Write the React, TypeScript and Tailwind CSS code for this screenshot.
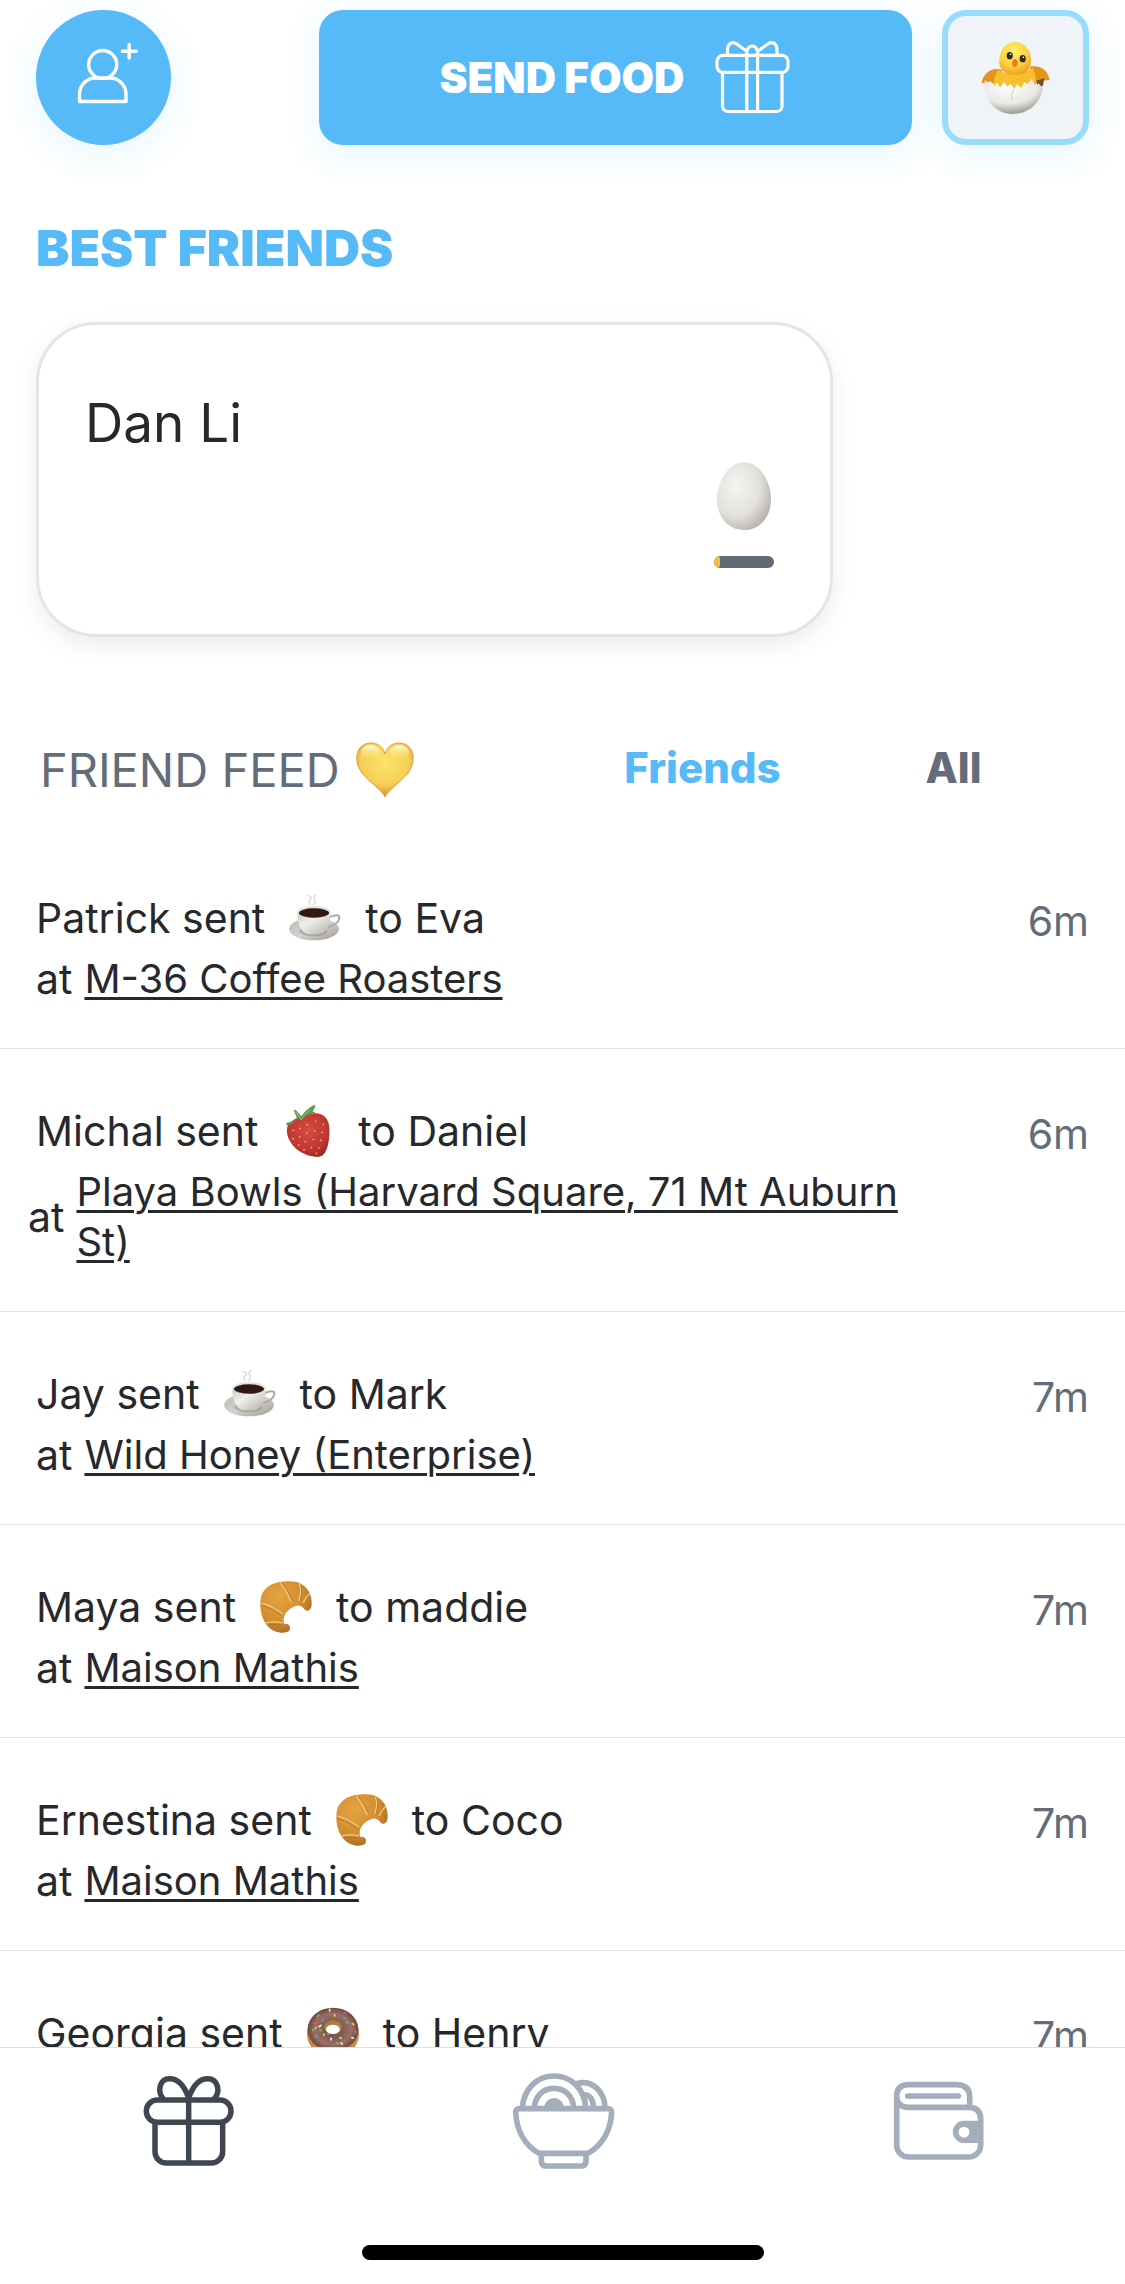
import { useState } from "react";

type Food = "coffee" | "strawberry" | "croissant" | "donut";

const feedData: {
  from: string;
  to: string;
  food: Food;
  place: string;
  time: string;
  wide?: boolean;
}[] = [
  { from: "Patrick", to: "Eva", food: "coffee", place: "M-36 Coffee Roasters", time: "6m" },
  {
    from: "Michal",
    to: "Daniel",
    food: "strawberry",
    place: "Playa Bowls (Harvard Square, 71 Mt Auburn St)",
    time: "6m",
    wide: true,
  },
  { from: "Jay", to: "Mark", food: "coffee", place: "Wild Honey (Enterprise)", time: "7m" },
  { from: "Maya", to: "maddie", food: "croissant", place: "Maison Mathis", time: "7m" },
  { from: "Ernestina", to: "Coco", food: "croissant", place: "Maison Mathis", time: "7m" },
  { from: "Georgia", to: "Henry", food: "donut", place: "Dunkin", time: "7m" },
];

function AddFriendIcon() {
  return (
    <svg viewBox="36 10 135 135" className="size-full" fill="none" stroke="white" strokeWidth="3.4" aria-hidden="true">
      <circle cx="102.7" cy="64.5" r="14" />
      <path d="M79.5 101.5V94a16 16 0 0 1 16-16h14.500a16 16 0 0 1 16 16v7.500z" strokeLinejoin="round" />
      <path d="M129.200 44.500v13.500M122.300 51.300h14" strokeLinecap="round" />
    </svg>
  );
}

function SendGiftIcon() {
  return (
    <svg
      viewBox="716 40 77 75"
      className="h-[75px] w-[77px]"
      fill="none"
      stroke="white"
      strokeWidth="3.2"
      strokeLinejoin="round"
      aria-hidden="true"
    >
      <rect x="719" y="55.300" width="71" height="17" rx="6" />
      <path d="M724.500 73v33a5.500 5.500 0 0 0 5.500 5.500h48.500a5.500 5.500 0 0 0 5.500-5.500V73" />
      <path d="M748.800 55v56M759.600 55v56" />
      <path d="M729.500 55v-5c0-6 4-9 8.500-6.500l10.500 7.500" />
      <path d="M779 55v-5c0-6-4-9-8.500-6.500l-10.500 7.500" />
      <path d="M748.800 55v-2.500a5.400 6.500 0 0 1 10.800 0V55" />
    </svg>
  );
}

function Chick() {
  return (
    <svg viewBox="1167 111 190 200" className="h-[72px] w-[69px]" aria-hidden="true">
      <defs>
        <radialGradient id="chickHead" cx="0.45" cy="0.3" r="0.75">
          <stop offset="0" stopColor="#fff06a" />
          <stop offset="0.6" stopColor="#fbcf3d" />
          <stop offset="1" stopColor="#ea9a1c" />
        </radialGradient>
        <radialGradient id="chickShell" cx="0.4" cy="0.2" r="0.85">
          <stop offset="0" stopColor="#ffffff" />
          <stop offset="0.6" stopColor="#e9e8e4" />
          <stop offset="1" stopColor="#8f8c84" />
        </radialGradient>
      </defs>
      <g transform="scale(1 .925)">
        <path d="M1225 204c-25-10-50 3-58 40l22-4 26 10z" fill="#e5941f" />
        <path d="M1302 194c30-6 48 8 55 40l-20 2-26 12z" fill="#e5941f" />
        <path d="M1320 236l22-8-4 24-14 6z" fill="#73501f" />
        <path d="M1212 205q50 25 98-8 12 30 8 60l-56 20-60-22q-2-25 10-50z" fill="#f7bf2d" />
        <path d="M1261 120c26 0 43 24 44 52 1 32-16 46-43 46-29 0-47-14-45-44 2-32 18-54 44-54z" fill="url(#chickHead)" />
        <ellipse cx="1246" cy="161" rx="8.500" ry="11" fill="#2b2722" />
        <ellipse cx="1282" cy="170" rx="8.500" ry="11" fill="#2b2722" />
        <circle cx="1248" cy="157" r="2.500" fill="#fff" />
        <circle cx="1284" cy="166" r="2.500" fill="#fff" />
        <path d="M1260 170q9 4 8 14-2 11-8 12-7-3-8-13 1-10 8-13z" fill="#e8791d" />
        <path
          d="M1177 234l8 8 8-5 8 17 10-12 8 14 12-16 8 14 10-8 9 14 10-14 10 12 8-18 10 6 10-16 12 22 8-8 8 10 4-4c-2 50-36 86-84 86s-77-40-77-86z"
          fill="url(#chickShell)"
        />
        <path d="M1258 260l-8 20 3 14" fill="none" stroke="#c2bfb8" strokeWidth="2.500" />
      </g>
    </svg>
  );
}

function Egg() {
  return (
    <svg viewBox="0 0 54 68" className="h-[68px] w-[54px]" aria-hidden="true">
      <defs>
        <radialGradient id="egg" cx="0.36" cy="0.36" r="0.72">
          <stop offset="0" stopColor="#f5f4f2" />
          <stop offset="0.6" stopColor="#e3e1dd" />
          <stop offset="1" stopColor="#b5b1a9" />
        </radialGradient>
      </defs>
      <path d="M27 0C42 0 54 19 54 37 54 55 43 68 27 68S0 55 0 37C0 19 12 0 27 0z" fill="url(#egg)" />
    </svg>
  );
}

function Heart() {
  return (
    <svg viewBox="0 0 58 56" className="h-14 w-[58px]" aria-hidden="true">
      <defs>
        <radialGradient id="heart" cx="0.5" cy="0.35" r="0.65">
          <stop offset="0" stopColor="#fae36e" />
          <stop offset="0.65" stopColor="#f5d055" />
          <stop offset="1" stopColor="#df8c35" />
        </radialGradient>
        <linearGradient id="heartShine" x1="0" y1="0" x2="0" y2="1">
          <stop offset="0" stopColor="#fffbe0" />
          <stop offset="1" stopColor="#fae36e" stopOpacity="0" />
        </linearGradient>
      </defs>
      <path
        d="M29 55C26 48 14 41 6 31-4 17 1 1 15 1c7 0 12 4 14 11C31 5 36 1 43 1c14 0 19 16 9 30-8 10-20 17-23 24z"
        fill="url(#heart)"
        stroke="#e2a040"
        strokeWidth="1"
      />
      <ellipse cx="14.500" cy="10.500" rx="9.500" ry="7.500" fill="url(#heartShine)" />
      <ellipse cx="43.500" cy="10.500" rx="9.500" ry="7.500" fill="url(#heartShine)" />
    </svg>
  );
}

function Coffee() {
  return (
    <svg viewBox="189 62 156 156" className="size-[52px]" aria-hidden="true">
      <defs>
        <linearGradient id="saucer" x1="0" y1="0" x2="1" y2="1">
          <stop offset="0" stopColor="#b9b7b1" />
          <stop offset="0.5" stopColor="#d5d3ce" />
          <stop offset="1" stopColor="#9c988f" />
        </linearGradient>
        <linearGradient id="cup" x1="0" y1="0" x2="1" y2="1">
          <stop offset="0" stopColor="#c9c7c1" />
          <stop offset="0.4" stopColor="#f0efeb" />
          <stop offset="1" stopColor="#b3afa6" />
        </linearGradient>
      </defs>
      <g fill="none" stroke="#d9d9d9" strokeWidth="4" strokeLinecap="round">
        <path d="M252 100q-6-10 2-17t-8-10M262 100q10-8 4-16t4-14" />
      </g>
      <ellipse cx="264" cy="173" rx="75" ry="34" fill="url(#saucer)" />
      <ellipse cx="262" cy="179" rx="42" ry="16" fill="#8e8b84" opacity="0.500" />
      <path d="M311 137q30-12 29 3-3 20-38 28" fill="none" stroke="#b0ada5" strokeWidth="6" />
      <path d="M214 122c0 34 10 66 38 67h24c28-2 38-35 38-67z" fill="url(#cup)" />
      <ellipse cx="264" cy="122" rx="50" ry="18" fill="#e4e2dd" />
      <ellipse cx="264" cy="125" rx="45" ry="14" fill="#2f1a12" />
      <path d="M225 131q39 16 78 0-12 8-39 8t-39-8z" fill="#76503a" />
    </svg>
  );
}

function Strawberry() {
  return (
    <svg viewBox="149 704 156 156" className="size-[52px]" aria-hidden="true">
      <defs>
        <radialGradient id="berry" cx="0.5" cy="0.4" r="0.65">
          <stop offset="0" stopColor="#d64b42" />
          <stop offset="0.7" stopColor="#c03731" />
          <stop offset="1" stopColor="#9a2520" />
        </radialGradient>
      </defs>
      <path
        d="M165 770c-6 25 9 49 26 65 24 18 46 25 70 24 24-4 32-48 30-88-2-28-20-44-46-42-32 2-74 21-80 41z"
        fill="url(#berry)"
      />
      <path
        d="M162 764q-2-8 8-8l14-2q6-8 10-10l-9-22q1-6 6-2l16 18q12-18 24-26l14-8q6 1 2 8l-6 12q8 0 8 4-14 4-30 8-8 12-16 14-4-5-2-8-12 8-18 16-10 8-21 6z"
        fill="#5b9a50"
      />
      <path d="M190 724l16 24 28-32" fill="none" stroke="#98c586" strokeWidth="3" />
      <g fill="#eebc68">
        <circle cx="183" cy="780" r="2.600" />
        <circle cx="203" cy="774" r="2.600" />
        <circle cx="225" cy="763" r="2.600" />
        <circle cx="250" cy="752" r="2.600" />
        <circle cx="273" cy="762" r="2.600" />
        <circle cx="182" cy="805" r="2.600" />
        <circle cx="202" cy="799" r="2.600" />
        <circle cx="223" cy="788" r="2.600" />
        <circle cx="247" cy="782" r="2.600" />
        <circle cx="270" cy="786" r="2.600" />
        <circle cx="199" cy="824" r="2.600" />
        <circle cx="219" cy="814" r="2.600" />
        <circle cx="243" cy="807" r="2.600" />
        <circle cx="266" cy="810" r="2.600" />
        <circle cx="215" cy="838" r="2.600" />
        <circle cx="237" cy="832" r="2.600" />
        <circle cx="260" cy="833" r="2.600" />
        <circle cx="252" cy="849" r="2.600" />
      </g>
    </svg>
  );
}

function Croissant() {
  return (
    <svg viewBox="172 755 158 158" className="size-[52px]" aria-hidden="true">
      <defs>
        <radialGradient id="crust" cx="0.35" cy="0.3" r="0.8">
          <stop offset="0" stopColor="#e5a443" />
          <stop offset="0.6" stopColor="#d28d31" />
          <stop offset="1" stopColor="#a0601e" />
        </radialGradient>
      </defs>
      <path
        d="M176 800c8-26 36-42 64-43 22-3 44-1 56 6 22 12 34 34 33 62-1 20-14 26-23 15-8-14-24-14-40-2-18 12-25 28-21 47 17-3 23 13 15 22-14 10-48 6-66-17-18-21-26-57-18-90z"
        fill="url(#crust)"
      />
      <g fill="none" stroke="#f0cc7a" strokeWidth="4" strokeLinecap="round">
        <path d="M234 762q20 24 32 56" />
        <path d="M292 765q8 20-2 48" />
        <path d="M178 822q30 8 62 32" />
        <path d="M190 882q26-6 50 0" />
        <path d="M322 794q-10 8-18 26" />
      </g>
      <g fill="none" stroke="#a8621c" strokeWidth="3" strokeLinecap="round" opacity="0.600">
        <path d="M240 762q20 26 32 52M297 769q6 20-1 44M178 829q30 8 58 30M196 889q22-4 42 0" />
      </g>
    </svg>
  );
}

function Donut() {
  return (
    <svg viewBox="195 145 158 158" className="size-[52px]" aria-hidden="true">
      <defs>
        <radialGradient id="glaze" cx="0.5" cy="0.5" r="0.55">
          <stop offset="0" stopColor="#6b4135" />
          <stop offset="0.65" stopColor="#967068" />
          <stop offset="1" stopColor="#60392d" />
        </radialGradient>
      </defs>
      <ellipse cx="274" cy="226" rx="79" ry="74" fill="#c18a4a" />
      <ellipse cx="274" cy="213" rx="77" ry="66" fill="url(#glaze)" />
      <ellipse cx="274" cy="206" rx="27" ry="21" fill="#b47b3f" />
      <ellipse cx="274" cy="213" rx="21" ry="14" fill="#fff" />
      <g strokeWidth="5" strokeLinecap="round">
        <path d="M264 152v5M237 201l-5 4M331 238l5 1M268 240v5M299 254l3 4" stroke="#f6efe4" />
        <path d="M307 161l6 4M218 193l7 3M224 181l5-5M330 208l2 7M312 232l6 1M246 250l-5 5" stroke="#dc5364" />
        <path d="M227 173l4-4M315 189l5 5M234 215l5 2M285 254l6 2M213 213v5" stroke="#6bc356" />
        <path d="M244 183l-3 5M307 180l3-2M221 232l4 4M341 218l2 5M257 226l4 2" stroke="#58a4d8" />
        <path d="M279 168v5M246 227v5M295 238l4 2M223 207l-3 4M333 195l4 4" stroke="#f0cc54" />
      </g>
    </svg>
  );
}

function FoodIcon({ food }: { food: Food }) {
  if (food === "coffee") return <Coffee />;
  if (food === "strawberry") return <Strawberry />;
  if (food === "croissant") return <Croissant />;
  return <Donut />;
}

function GiftTabIcon() {
  return (
    <svg
      viewBox="109 99 312 288"
      className="h-24 w-[104px]"
      fill="none"
      stroke="currentColor"
      strokeWidth="16.500"
      strokeLinejoin="round"
      aria-hidden="true"
    >
      <rect x="140" y="180" width="254" height="67" rx="33" />
      <path d="M166 247v88a34 34 0 0 0 34 34h135a34 34 0 0 0 34-34v-88M267 165v204" />
      <path d="M192 178c-20-22-14-62 18-62 28 0 46 26 57 58 11-32 30-58 57-58 32 0 40 40 18 62" />
    </svg>
  );
}

function BowlTabIcon() {
  return (
    <svg
      viewBox="64 99 312 288"
      className="h-24 w-[104px]"
      fill="none"
      stroke="currentColor"
      strokeWidth="17"
      strokeLinejoin="round"
      aria-hidden="true"
    >
      <path d="M88 206H356a10 10 0 0 1 10 10c-2 54-28 99-71 124H148c-43-25-68-70-70-124a10 10 0 0 1 10-10z" />
      <path d="M155 340v22q0 16 16 16h102q16 0 16-16v-22" />
      <path d="M98 204c4-56 42-96 95-96s92 40 95 96M134 204c2-36 26-59 59-59s57 23 59 59" />
      <path d="M261 131c44-14 84 22 85 73M277 166c20-6 34 10 34 38" />
      <path d="M163 204a30 30 0 0 1 60 0z" fill="currentColor" stroke="none" />
    </svg>
  );
}

function WalletTabIcon() {
  return (
    <svg
      viewBox="49 99 312 288"
      className="h-24 w-[104px]"
      fill="none"
      stroke="currentColor"
      strokeWidth="17"
      strokeLinejoin="round"
      aria-hidden="true"
    >
      <path d="M81 170v146a35 35 0 0 0 35 35h181a36 36 0 0 0 36-36v-77c0-24-12-36-36-36H116c-23 0-35-12-35-34s12-34 35-34h144c26 0 40 12 40 37v32" />
      <path d="M114 168h152" strokeLinecap="round" />
      <path
        d="M334 242h-51a33 33 0 0 0 0 67h51zM283 260a16.500 16.500 0 1 1 0 33 16.500 16.500 0 1 1 0-33z"
        fill="currentColor"
        fillRule="evenodd"
        stroke="none"
      />
    </svg>
  );
}

const tabs = [
  { label: "Gifts", Icon: GiftTabIcon },
  { label: "Food", Icon: BowlTabIcon },
  { label: "Wallet", Icon: WalletTabIcon },
];

export default function App() {
  const [feed, setFeed] = useState("Friends");
  const [tab, setTab] = useState("Gifts");

  return (
    <div className="flex h-screen flex-col bg-white font-['Inter',sans-serif] text-[#26282c]">
      <main className="min-h-0 flex-1 overflow-hidden">
        <header className="flex px-9 pt-[10px]">
          <button
            aria-label="Add friend"
            className="size-[135px] shrink-0 rounded-full bg-[#56baf9] shadow-[0_8px_36px_rgba(86,200,250,0.16)]"
          >
            <AddFriendIcon />
          </button>
          <button className="mr-[30px] ml-[148px] flex h-[135px] flex-1 items-center justify-center gap-[30px] rounded-3xl bg-[#56baf9] text-[42px] font-black whitespace-nowrap text-white shadow-[0_8px_36px_rgba(86,200,250,0.16)]">
            SEND FOOD
            <SendGiftIcon />
          </button>
          <button
            aria-label="My pet"
            className="flex h-[135px] w-[147px] shrink-0 items-center justify-center rounded-3xl border-[6px] border-[#99dbfa] bg-[#f0f3f8] shadow-[0_8px_36px_rgba(86,200,250,0.16)]"
          >
            <Chick />
          </button>
        </header>

        <section className="mt-[74px] px-9">
          <h2 className="text-[50px] leading-[58px] font-black text-[#56baf9]">BEST FRIENDS</h2>
          <button className="mt-[45px] flex h-[315px] w-[797px] max-w-full justify-between rounded-[60px] border-[3px] border-[#dfe6ed] bg-white py-[66px] pr-14 pl-[46px] text-left shadow-[0_8px_24px_rgba(0,0,0,0.08)]">
            <span className="text-[53px] leading-[64px]">Dan Li</span>
            <span className="flex flex-col items-center gap-[26px] self-end">
              <Egg />
              <span className="block h-3 w-[60px] overflow-hidden rounded-full bg-[#616b75]">
                <span className="block h-full w-[6px] rounded-full bg-[#efbe43]" />
              </span>
            </span>
          </button>
        </section>

        <section className="mt-[101px]">
          <div className="flex h-16 items-center justify-between pr-[46px] pl-10">
            <h2 className="flex items-center gap-4 text-[47px] text-[#636c78]">
              FRIEND FEED
              <Heart />
            </h2>
            <div className="grid w-[502px] grid-cols-2 pb-1 text-[42px] leading-[50px] font-extrabold">
              {["Friends", "All"].map((name) => (
                <button
                  key={name}
                  onClick={() => setFeed(name)}
                  className={feed === name ? "text-[#56baf9]" : "text-[#636c78]"}
                >
                  {name}
                </button>
              ))}
            </div>
          </div>

          <ul className="mt-[34px] text-[41px] leading-[50px]">
            {feedData.map((item, idx) => (
              <li key={idx} className="flex justify-between border-b border-[#e3e4e6] px-9 pt-[52px] pb-11">
                <div className="w-[874px]">
                  <p className="flex h-[60px] items-center gap-6">
                    <span>{item.from} sent</span>
                    <FoodIcon food={item.food} />
                    <span>to {item.to}</span>
                  </p>
                  <div className={`mt-[6px] flex items-center gap-3 ${item.wide ? "-ml-2" : ""}`}>
                    <span>at</span>
                    <a href="#" className="text-[40px] underline decoration-[3px] underline-offset-[4px]">
                      {item.place}
                    </a>
                  </div>
                </div>
                <time className="pt-2 text-[#636c78]">{item.time}</time>
              </li>
            ))}
          </ul>
        </section>
      </main>

      <footer className="border-t border-[#dcdee1] bg-white pt-[25px] pb-6">
        <nav className="grid grid-cols-3">
          {tabs.map(({ label, Icon }) => (
            <button
              key={label}
              aria-label={label}
              onClick={() => setTab(label)}
              className={`flex justify-center ${tab === label ? "text-[#40464f]" : "text-[#a3adbb]"}`}
            >
              <Icon />
            </button>
          ))}
        </nav>
        <div className="mx-auto mt-[76px] h-[15px] w-[402px] rounded-full bg-black" />
      </footer>
    </div>
  );
}
